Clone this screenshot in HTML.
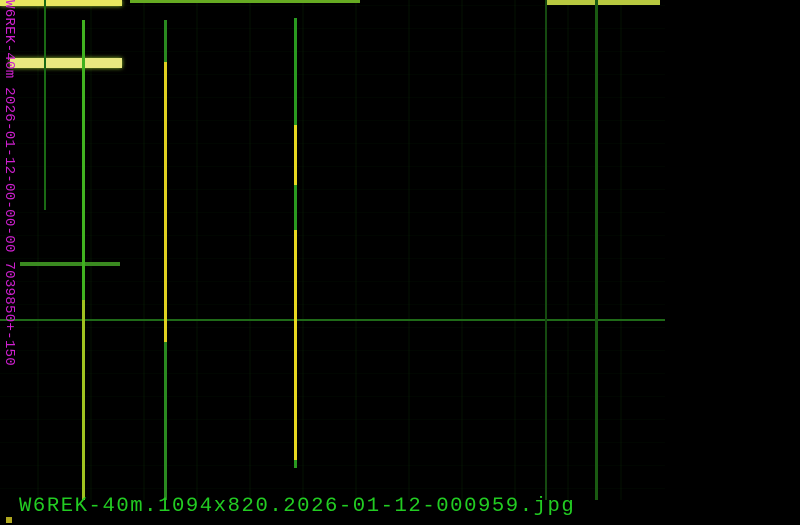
<!DOCTYPE html>
<html><head><style>
body{margin:0;width:800px;height:525px;background:#000;overflow:hidden;position:relative}
div{position:absolute}
.noise{left:0;top:0;width:665px;height:500px;
background:
repeating-linear-gradient(90deg,transparent 0 37px,rgba(30,110,20,.25) 37px 39px,transparent 39px 53px),
repeating-linear-gradient(0deg,transparent 0 11px,rgba(20,90,15,.2) 11px 12px,transparent 12px 23px);
opacity:.35}
.v{width:3px}
.cap{left:19px;top:495px;font:20.6px "Liberation Mono",monospace;letter-spacing:1.55px;color:#22cc22;white-space:nowrap}
.side{left:2px;top:0;transform-origin:0 0;transform:translate(15px,0) rotate(90deg);font:14.2px "Liberation Mono",monospace;letter-spacing:0.2px;color:#d020d0;white-space:nowrap}
</style></head><body>
<div class="noise"></div>
<div style="left:0;top:0;width:122px;height:6px;background:#e8e860;box-shadow:0 0 4px #9c3"></div>
<div style="left:10px;top:58px;width:112px;height:10px;background:#e8e880;box-shadow:0 0 4px #9c3"></div>
<div style="left:545px;top:0;width:115px;height:5px;background:#b8c840"></div>
<div style="left:130px;top:0;width:230px;height:3px;background:#6a2"></div>
<div style="left:20px;top:262px;width:100px;height:4px;background:#3a8a20"></div>
<div style="left:0;top:319px;width:665px;height:2px;background:#1f6a18"></div>
<div class="v" style="left:82px;top:20px;height:480px;background:#40b020"></div>
<div class="v" style="left:82px;top:300px;height:200px;background:#a0c020"></div>
<div class="v" style="left:164px;top:20px;height:480px;background:#2a8a20"></div>
<div class="v" style="left:164px;top:62px;height:280px;background:#e0d020"></div>
<div class="v" style="left:294px;top:18px;height:450px;background:#2a9a20"></div>
<div class="v" style="left:294px;top:125px;height:60px;background:#e8d820"></div>
<div class="v" style="left:294px;top:230px;height:230px;background:#e8d820"></div>
<div style="left:44px;top:0;width:2px;height:210px;background:#1a6a14"></div>
<div style="left:545px;top:0;width:2px;height:500px;background:#154a10"></div>
<div style="left:595px;top:0;width:3px;height:500px;background:#1a5a12"></div>
<div class="cap">W6REK-40m.1094x820.2026-01-12-000959.jpg</div>
<div class="side">W6REK-40m 2026-01-12-00-00-00 7039850+-150</div>
<div style="left:6px;top:517px;width:6px;height:6px;background:#b0a820"></div>
</body></html>
